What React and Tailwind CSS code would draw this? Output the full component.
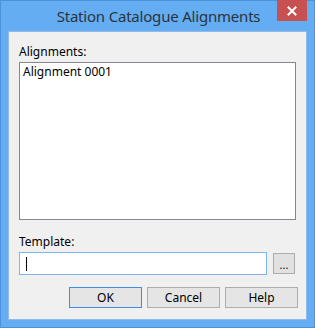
export default function App() {
  const font = { fontFamily: '"Segoe UI", "Noto Sans", "Liberation Sans", sans-serif' };
  return (
    <div className="w-[315px] h-[328px] bg-[#64adf2] border border-[#4a90dc] flex flex-col" style={font}>
      {/* Title bar */}
      <div className="h-[30px] flex items-start relative shrink-0">
        <div className="flex-1 text-center text-[15px] tracking-[-0.2px] leading-[30px] text-[#2a3440] pl-[2px]">
          Station Catalogue Alignments
        </div>
        <button className="absolute right-[7px] top-[-1px] w-[30px] h-[21px] bg-[#c75050] flex items-center justify-center">
          <svg width="10" height="10" viewBox="0 0 10 10" stroke="white" strokeWidth="2" strokeLinecap="square">
            <path d="M1.5 1.5l7 7M8.5 1.5l-7 7" />
          </svg>
        </button>
      </div>

      {/* Client area */}
      <div className="mx-[7px] mb-[7px] flex-1 bg-[#f0f0f0] border border-[#8fbbe6] flex flex-col px-[10px] text-[12px] text-black">
        <div className="mt-[10px] h-[20px] leading-[20px]">Alignments:</div>
        <div className="h-[158px] bg-white border border-[#828790] px-[3px] pt-[1px] leading-[16px]">
          Alignment 0001
        </div>
        <div className="mt-[12px] h-[20px] leading-[20px]">Template:</div>
        <div className="flex items-center gap-[6px]">
          <div className="w-[248px] h-[23px] bg-white border border-[#7eb4ea] flex items-center pl-[6px]">
            <div className="w-px h-[14px] bg-black" />
          </div>
          <button className="w-[22px] h-[21px] bg-[#e1e1e1] border border-[#adadad] text-[11px] leading-[12px] pb-[2px] flex items-end justify-center">
            ...
          </button>
        </div>
        <div className="mt-[12px] flex justify-end gap-[5px] mr-[-2px]">
          <button className="w-[73px] h-[21px] bg-[#e5e5e5] border border-[#3c8ee6] leading-[19px]">OK</button>
          <button className="w-[73px] h-[21px] bg-[#e5e5e5] border border-[#adadad] leading-[19px]">Cancel</button>
          <button className="w-[73px] h-[21px] bg-[#e5e5e5] border border-[#adadad] leading-[19px]">Help</button>
        </div>
      </div>
    </div>
  );
}
